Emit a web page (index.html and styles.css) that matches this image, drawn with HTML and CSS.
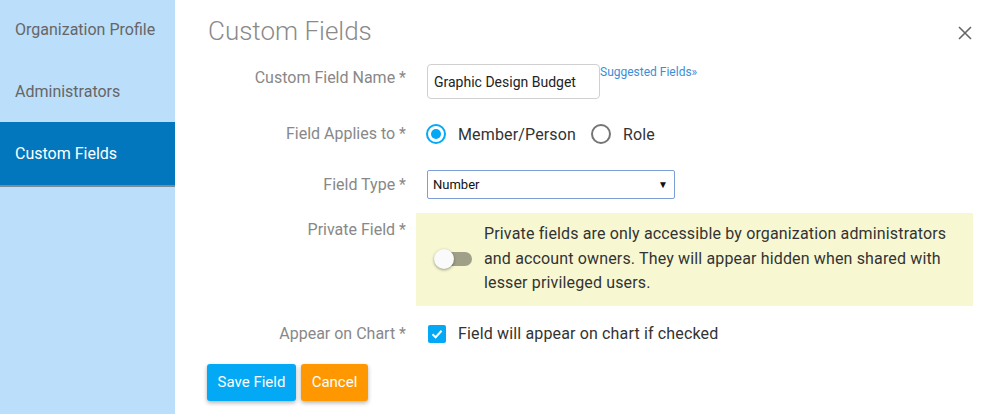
FILE: index.html
```html
<!DOCTYPE html>
<html lang="en">
<head>
    <meta charset="UTF-8">
    <title>Custom Fields</title>
    <link rel="stylesheet" href="styles.css">
</head>
<body>
    <div class="layout">
        <nav class="sidebar">
            <a class="nav-item">Organization Profile</a>
            <a class="nav-item">Administrators</a>
            <a class="nav-item active">Custom Fields</a>
        </nav>

        <main class="main">
            <div class="header">
                <h1>Custom Fields</h1>
                <button class="close" aria-label="Close">
                    <svg width="14" height="14" viewBox="0 0 14 14"><path d="M1 1L13 13M13 1L1 13" stroke="#666" stroke-width="1.6" fill="none"/></svg>
                </button>
            </div>

            <div class="row row-name">
                <label class="label">Custom Field Name *</label>
                <div class="control">
                    <input class="text-input" type="text" value="Graphic Design Budget">
                    <a class="suggested">Suggested Fields&raquo;</a>
                </div>
            </div>

            <div class="row row-applies">
                <label class="label">Field Applies to *</label>
                <div class="control">
                    <span class="radio checked"></span>
                    <span class="option-text">Member/Person</span>
                    <span class="radio"></span>
                    <span class="option-text">Role</span>
                </div>
            </div>

            <div class="row row-type">
                <label class="label">Field Type *</label>
                <div class="control">
                    <div class="select">
                        <span>Number</span>
                        <span class="arrow">&#9660;</span>
                    </div>
                </div>
            </div>

            <div class="row row-private">
                <label class="label">Private Field *</label>
                <div class="private-box">
                    <span class="toggle"><span class="knob"></span></span>
                    <p>Private fields are only accessible by organization administrators and account owners. They will appear hidden when shared with lesser privileged users.</p>
                </div>
            </div>

            <div class="row row-chart">
                <label class="label">Appear on Chart *</label>
                <div class="control">
                    <span class="checkbox">
                        <svg width="18" height="18" viewBox="0 0 18 18"><path d="M4.5 9.2L7.6 12.2L13.6 5.8" stroke="#fff" stroke-width="2" fill="none"/></svg>
                    </span>
                    <span class="option-text">Field will appear on chart if checked</span>
                </div>
            </div>

            <div class="actions">
                <button class="btn btn-save">Save Field</button>
                <button class="btn btn-cancel">Cancel</button>
            </div>
        </main>
    </div>
</body>
</html>
```

FILE: styles.css
```css
body {
    margin: 0;
    font-family: Roboto, 'Liberation Sans', sans-serif;
    background: #ffffff;
    color: #333;
}
.layout {
    display: flex;
    height: 414px;
}
.sidebar {
    width: 175px;
    flex-shrink: 0;
    background-color: #bbdefb;
    display: flex;
    flex-direction: column;
}
.nav-item {
    display: flex;
    align-items: center;
    height: 62px;
    padding-left: 15px;
    font-size: 16px;
    color: #666;
}
.nav-item:first-child {
    margin-top: -2px;
}
.nav-item.active {
    background-color: #0277bd;
    color: #ffffff;
    border-bottom: 2px solid #7a8a96;
    height: 63px;
}
.main {
    flex: 1;
    padding: 0 26px 0 32px;
}
.header {
    display: flex;
    align-items: center;
    justify-content: space-between;
    height: 50px;
    padding-top: 12px;
    box-sizing: border-box;
    margin-bottom: 14px;
}
h1 {
    margin: 0 0 0 1px;
    font-family: 'Roboto Light', Roboto, sans-serif;
    font-size: 26px;
    font-weight: 300;
    color: #8a8a8a;
}
.close {
    border: none;
    background: none;
    padding: 0;
    margin: 4px 1px 0 0;
    display: flex;
}
.row {
    display: grid;
    grid-template-columns: 209px 1fr;
    align-items: start;
}
.label {
    text-align: right;
    padding-right: 10px;
    font-size: 16px;
    line-height: 20px;
    color: #888;
}
.control {
    display: flex;
    align-items: center;
    padding-left: 11px;
}
.row-name {
    height: 35px;
    margin-bottom: 21px;
}
.row-name .label {
    padding-top: 4px;
}
.row-name .control {
    align-items: flex-start;
}
.text-input {
    width: 173px;
    height: 35px;
    box-sizing: border-box;
    border: 1px solid #d0d0d0;
    border-radius: 4px;
    padding: 0 6px;
    font-family: Roboto, 'Liberation Sans', sans-serif;
    font-size: 14px;
    color: #222;
}
.suggested {
    font-size: 12px;
    color: #3b8ed8;
    margin-top: 1px;
}
.row-applies {
    height: 28px;
    align-items: center;
    margin-bottom: 22px;
}
.radio {
    width: 20px;
    height: 20px;
    box-sizing: border-box;
    border: 2px solid #757575;
    border-radius: 50%;
    display: flex;
    align-items: center;
    justify-content: center;
    margin-left: -1px;
}
.radio.checked {
    border-color: #03a9f4;
}
.radio.checked::after {
    content: "";
    width: 10px;
    height: 10px;
    border-radius: 50%;
    background: #03a9f4;
}
.option-text {
    font-size: 16px;
    letter-spacing: 0.15px;
    color: #333;
    margin-left: 12px;
    margin-right: 16px;
}
.row-type {
    height: 29px;
    align-items: center;
    margin-bottom: 14px;
}
.select {
    width: 248px;
    height: 29px;
    box-sizing: border-box;
    border: 1px solid #7d9fd8;
    border-radius: 2px;
    display: flex;
    align-items: center;
    justify-content: space-between;
    padding: 0 6px 0 5px;
    font-size: 13px;
    color: #111;
}
.arrow {
    font-size: 10px;
}
.row-private {
    margin-bottom: 17px;
}
.row-private .label {
    padding-top: 7px;
}
.private-box {
    display: flex;
    align-items: center;
    background-color: #f7f8d2;
    padding: 9px 20px 10px 19px;
}
.private-box p {
    margin: 0 0 0 12px;
    font-size: 16px;
    letter-spacing: 0.15px;
    line-height: 24.5px;
    color: #333;
}
.toggle {
    position: relative;
    flex-shrink: 0;
    width: 34px;
    height: 14px;
    margin-left: 3px;
    border-radius: 7px;
    background-color: #a0a088;
}
.knob {
    position: absolute;
    left: -4px;
    top: -3px;
    width: 20px;
    height: 20px;
    border-radius: 50%;
    background: #fafafa;
    box-shadow: 0 1px 3px rgba(0, 0, 0, 0.4);
}
.row-chart {
    height: 22px;
    align-items: center;
    margin-bottom: 19px;
}
.checkbox {
    width: 18px;
    height: 18px;
    border-radius: 2px;
    background: #03a9f4;
    display: flex;
    margin-left: 1px;
}
.row-chart .option-text {
    margin-left: 12px;
}
.actions {
    display: flex;
    gap: 5px;
}
.btn {
    height: 37px;
    border: none;
    border-radius: 3px;
    padding: 0 10px;
    font-family: Roboto, 'Liberation Sans', sans-serif;
    font-size: 15px;
    color: #ffffff;
    box-shadow: 0 2px 4px rgba(0, 0, 0, 0.3);
}
.btn-save {
    width: 89px;
    background-color: #03a9f4;
}
.btn-cancel {
    width: 67px;
    background-color: #ff9800;
}
```
